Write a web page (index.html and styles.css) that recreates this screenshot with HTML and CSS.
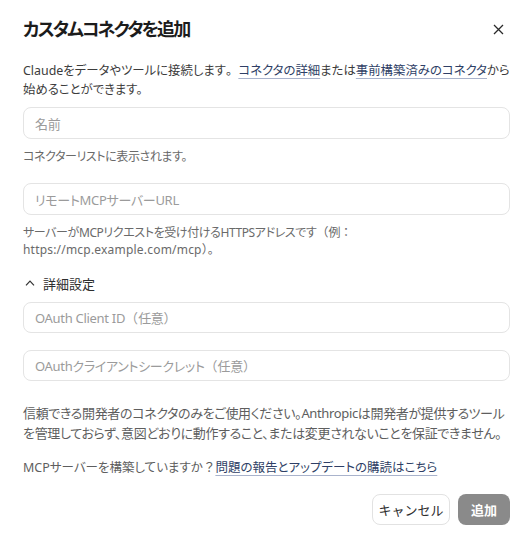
FILE: index.html
```html
<!DOCTYPE html>
<html lang="ja">
<head>
<meta charset="utf-8">
<link rel="stylesheet" href="styles.css">
</head>
<body>
<div class="dialog">
  <div class="header">
    <h1 class="title">カスタムコネクタを追加</h1>
    <button class="close" aria-label="閉じる">
      <svg width="11" height="11" viewBox="0 0 11 11"><path d="M1 1L10 10M10 1L1 10" stroke="#2a2a2a" stroke-width="1.3" fill="none"/></svg>
    </button>
  </div>
  <p class="desc">Claudeをデータやツールに接続します<span class="fw">。</span><a class="link">コネクタの詳細</a>または<a class="link">事前構築済みのコネクタ</a>から始めることができます。</p>

  <div class="field first">
    <div class="input">名前</div>
    <p class="help">コネクターリストに表示されます。</p>
  </div>
  <div class="field">
    <div class="input">リモートMCPサーバーURL</div>
    <p class="help">サーバーがMCPリクエストを受け付けるHTTPSアドレスです<span class="fw">（</span>例<span class="fw">：</span> <span class="url">https://mcp.example.com/mcp</span><span class="fw">）。</span></p>
  </div>

  <div class="advanced">
    <svg class="chev" width="10" height="6" viewBox="0 0 10 6"><path d="M1 5.3L5 1.2L9 5.3" stroke="#333" stroke-width="1.2" fill="none"/></svg>
    <span>詳細設定</span>
  </div>
  <div class="input adv1"><span>OAuth Client ID<span class="fw">（</span>任意<span class="fw">）</span></span></div>
  <div class="input adv2"><span>OAuthクライアントシークレット<span class="fw">（</span>任意<span class="fw">）</span></span></div>

  <p class="warn">信頼できる開発者のコネクタのみをご使用ください。Anthropicは開発者が提供するツールを管理しておらず、意図どおりに動作すること、または変更されないことを保証できません。</p>
  <p class="mcp">MCPサーバーを構築していますか<span class="fw">？</span><a class="link">問題の報告とアップデートの購読はこちら</a></p>

  <div class="actions">
    <button class="btn cancel">キャンセル</button>
    <button class="btn add">追加</button>
  </div>
</div>
</body>
</html>
```

FILE: styles.css
```css
* { box-sizing: border-box; }
html, body { margin: 0; padding: 0; background: #ffffff; }
body {
  font-family: "Noto Sans", "Noto Sans CJK JP", sans-serif;
  font-feature-settings: "palt";
  color: #3a3a3a;
}
.dialog {
  width: 532px;
  height: 546px;
  padding: 17px 22px 0 23px;
  background: #fff;
}
.header {
  display: flex;
  align-items: center;
  justify-content: space-between;
}
.title {
  margin: 0;
  font-size: 18px;
  line-height: 24px;
  font-weight: 700;
  color: #1c1c1c;
  letter-spacing: -1.9px;
}
.close {
  border: none;
  background: none;
  padding: 0;
  margin-right: 6px;
  width: 12px;
  height: 12px;
  display: flex;
  align-items: center;
  justify-content: center;
}
.fw { font-feature-settings: normal; letter-spacing: 0; }
.desc {
  margin: 20px 0 0;
  font-size: 12.4px;
  line-height: 19px;
  color: #3c3c3c;
}
.link {
  color: #2f3f66;
  text-decoration: underline;
  text-decoration-color: #a9b3cc;
  text-underline-offset: 3px;
  text-decoration-thickness: 1px;
}
.field.first { margin-top: 8px; }
.field + .field { margin-top: 18px; }
.input {
  height: 32px;
  border: 1px solid #e4e4e4;
  border-radius: 8px;
  padding: 0 11px;
  display: flex;
  align-items: center;
  font-size: 13px;
  color: #9b9b9b;
  letter-spacing: -0.3px;
}
.help {
  margin: 9px 0 0;
  font-size: 12px;
  line-height: 17px;
  color: #6a6a6a;
  letter-spacing: -0.4px;
}
.url { letter-spacing: 0.2px; }
.advanced {
  margin-top: 15px;
  height: 20px;
  display: flex;
  align-items: center;
  gap: 8px;
  padding-left: 2px;
  font-size: 13px;
  color: #2e2e2e;
}
.chev { display: block; }
.adv1 { margin-top: 9px; height: 31px; }
.adv2 { margin-top: 17px; height: 31px; }
.warn {
  margin: 22px 0 0;
  font-size: 13px;
  line-height: 20px;
  color: #5e5e5e;
  letter-spacing: -0.35px;
}
.mcp {
  margin: 15px 0 0;
  font-size: 12.5px;
  line-height: 20px;
  color: #5e5e5e;
}
.actions {
  margin-top: 16px;
  display: flex;
  justify-content: flex-end;
  gap: 8px;
}
.btn {
  height: 31px;
  border-radius: 8px;
  font-family: inherit;
  font-size: 13px;
  padding: 0;
  white-space: nowrap;
}
.cancel {
  width: 78px;
  background: #fff;
  border: 1px solid #e2e2e2;
  color: #2e2e2e;
}
.add {
  width: 52px;
  background: #8a8a8a;
  border: none;
  color: #fff;
  font-weight: 700;
}
```
